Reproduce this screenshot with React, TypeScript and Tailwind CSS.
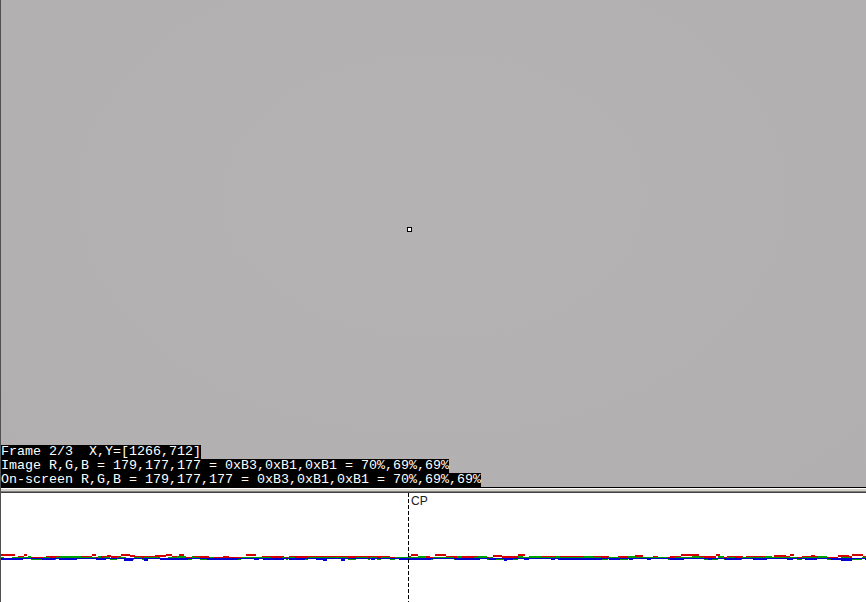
import React from "react";

function rng(seed: number) {
  let s = seed >>> 0;
  return () => {
    s = (s * 1664525 + 1013904223) >>> 0;
    return s / 4294967296;
  };
}

type Seg = { x: number; y: number; w: number };

function makeSegs(seed: number, base: number, spread: number[], minW: number, maxW: number): Seg[] {
  const r = rng(seed);
  const out: Seg[] = [];
  let x = 0;
  while (x < 866) {
    const w = minW + Math.floor(r() * (maxW - minW + 1));
    const off = spread[Math.floor(r() * spread.length)];
    out.push({ x, y: base + off, w });
    x += w;
  }
  return out;
}

const red = makeSegs(7, 63, [0, 0, 0, 0, 1, -1, 0, 1, -2], 3, 12);
const green = makeSegs(19, 64, [0, 0, 1, 1, 0, -1], 2, 9);
const blue = makeSegs(31, 65, [0, 0, 0, 0, 1, 1, 0], 3, 14);

export default function App() {
  const mono = { fontFamily: '"Liberation Mono", "Courier New", monospace' };
  return (
    <div className="w-[866px] h-[602px] flex flex-col overflow-hidden border-l border-[#505050] bg-white">
      <div className="relative h-[487px] bg-[#b3b1b1] shrink-0" style={{ backgroundImage: "radial-gradient(ellipse at 50% 40%, #b4b2b2 0%, #b3b1b1 50%, #b1afaf 100%)" }}>
        <div className="absolute left-[406px] top-[227px] w-[5px] h-[5px] border border-black bg-white" />
        <div className="absolute left-0 bottom-0 flex flex-col items-start text-white text-[13.33px] leading-[14px] whitespace-pre" style={mono}>
          <span className="bg-black">Frame 2/3  X,Y=[1266,712]</span>
          <span className="bg-black">Image R,G,B = 179,177,177 = 0xB3,0xB1,0xB1 = 70%,69%,69%</span>
          <span className="bg-black">On-screen R,G,B = 179,177,177 = 0xB3,0xB1,0xB1 = 70%,69%,69%</span>
        </div>
      </div>
      <div className="h-px bg-black shrink-0" />
      <div className="h-px bg-white shrink-0" />
      <div className="h-[2px] bg-[#d4d0c8] shrink-0" />
      <div className="h-px bg-[#808080] shrink-0" />
      <div className="h-px bg-[#404040] shrink-0" />
      <div className="relative flex-1 bg-white">
        <svg className="absolute inset-0" width="865" height="109" shapeRendering="crispEdges">
          {red.map((s, i) => (
            <rect key={"r" + i} x={s.x} y={s.y} width={s.w} height={2} fill="#d40000" />
          ))}
          {green.map((s, i) => (
            <rect key={"g" + i} x={s.x} y={s.y} width={s.w} height={2} fill="#00a000" />
          ))}
          <rect x={0} y={65} width={865} height={1} fill="#0000d0" />
          {blue.map((s, i) => (
            <rect key={"b" + i} x={s.x} y={s.y} width={s.w} height={(i % 3) === 0 ? 2 : 1} fill="#0000d0" />
          ))}
          <line x1={407.5} y1={0} x2={407.5} y2={109} stroke="#000" strokeWidth={1} strokeDasharray="4 2" />
        </svg>
        <span className="absolute left-[410px] top-[1px] text-[12px] leading-[14px] text-[#202020]" style={{ fontFamily: '"Liberation Sans", Arial, sans-serif' }}>
          CP
        </span>
      </div>
    </div>
  );
}
